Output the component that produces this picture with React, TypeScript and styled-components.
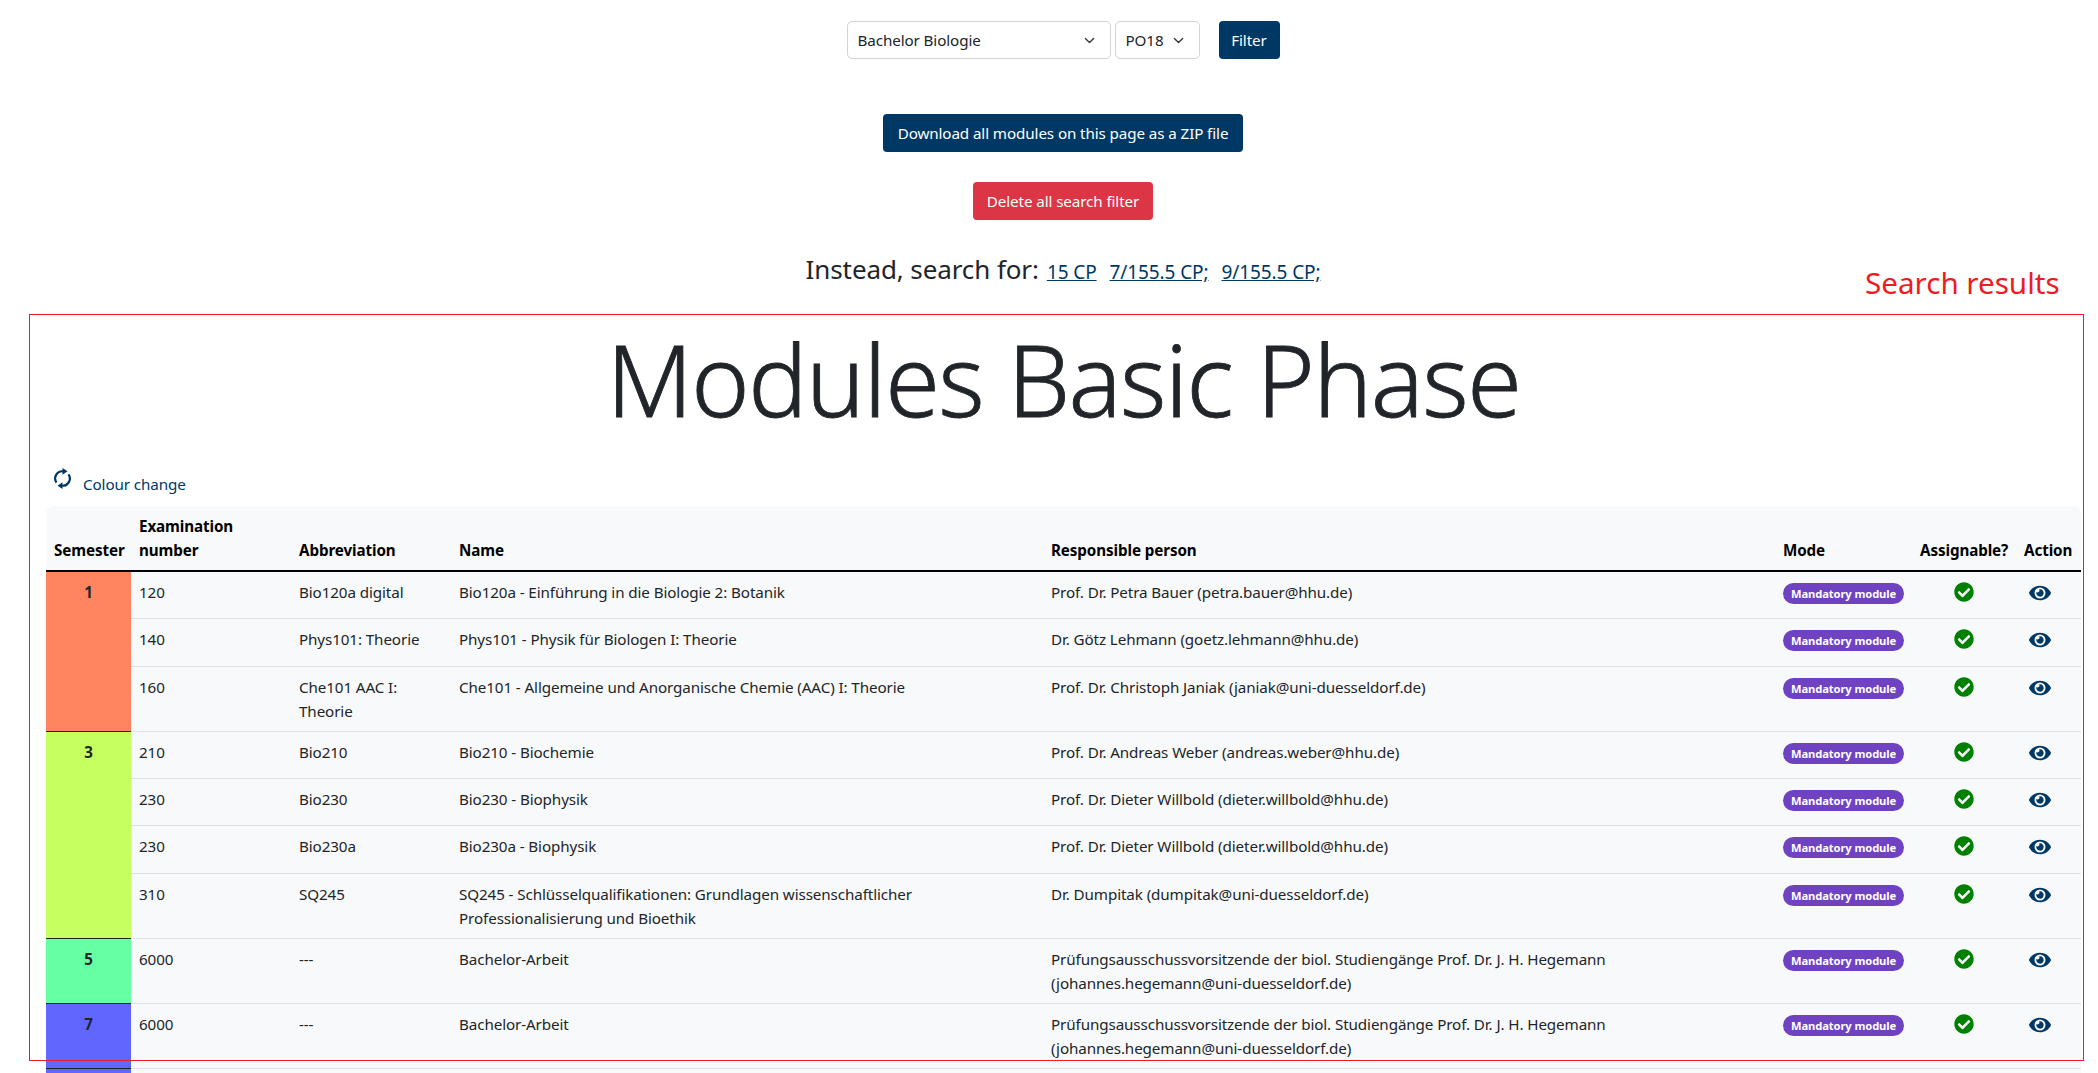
import React from 'react';
import styled, { createGlobalStyle } from 'styled-components';
import { FaCheckCircle, FaEye } from 'react-icons/fa';

const BLUE = '#003865';
const RED = '#ed1c24';

const GlobalStyle = createGlobalStyle`
  html, body {
    margin: 0;
    height: 1073px;
    overflow: hidden;
    background: #fff;
  }
  body {
    font-family: "Noto Sans", "Liberation Sans", sans-serif;
    font-size: 15.2px;
    line-height: 24px;
    color: #212529;
    letter-spacing: -0.1px;
  }
`;

const Page = styled.div`
  position: relative;
  width: 2098px;
  height: 1073px;
  overflow: hidden;
`;

const TopSection = styled.div`
  display: flex;
  flex-direction: column;
  align-items: center;
  padding: 21px 0 0 28px;
`;

const FilterForm = styled.form`
  display: flex;
  align-items: center;
  height: 38px;
`;

const Select = styled.select<{ $width: number }>`
  appearance: none;
  box-sizing: border-box;
  width: ${({ $width }) => $width}px;
  height: 38px;
  margin-right: 4px;
  padding: 0 10px;
  border: 1px solid #ced4da;
  border-radius: 5px;
  font: inherit;
  letter-spacing: inherit;
  color: #212529;
  background: #fff url("data:image/svg+xml,%3csvg xmlns='http://www.w3.org/2000/svg' viewBox='0 0 16 16'%3e%3cpath fill='none' stroke='%23343a40' stroke-linecap='round' stroke-linejoin='round' stroke-width='2' d='m2 5 6 6 6-6'/%3e%3c/svg%3e") no-repeat right 14px center / 13px 11px;
`;

const Button = styled.button<{ $danger?: boolean }>`
  box-sizing: border-box;
  height: 38px;
  padding: 0 ${({ $danger }) => ($danger ? 13.5 : 14.5)}px;
  border: 0;
  border-radius: 4px;
  font: inherit;
  letter-spacing: inherit;
  color: #fff;
  background: ${({ $danger }) => ($danger ? '#dc3545' : BLUE)};
`;

const FilterButton = styled(Button)`
  width: 61px;
  margin-left: 15px;
  padding: 0;
`;

const DownloadButton = styled(Button)`
  margin-top: 55px;
`;

const DeleteButton = styled(Button)`
  margin-top: 30px;
`;

const Instead = styled.div`
  display: flex;
  align-items: baseline;
  gap: 13px;
  margin-top: 31px;
  height: 36px;
  line-height: 36px;
`;

const InsteadLabel = styled.span`
  font-size: 26px;
  margin-right: -5px;
`;

const InsteadLink = styled.a`
  font-size: 19px;
  color: ${BLUE};
  text-decoration: underline;
`;

const Results = styled.section`
  padding: 0 17px 0 46px;
`;

const Title = styled.h1`
  margin: 0;
  padding-top: 34px;
  height: 115px;
  font-size: 99px;
  line-height: 115px;
  font-weight: 300;
  text-align: center;
  letter-spacing: -1.5px;
  -webkit-text-stroke: 0.8px #212529;
`;

const ColourChange = styled.a`
  display: flex;
  align-items: flex-end;
  gap: 12px;
  height: 24px;
  margin: 36px 0 10px 8px;
  color: ${BLUE};
  text-decoration: none;
`;

const SyncSvg = styled.svg`
  width: 17px;
  height: 21px;
  margin-bottom: 7px;
  fill: none;
  stroke: ${BLUE};
  stroke-width: 2.2;
`;

const SyncHead = styled.path`
  fill: ${BLUE};
  stroke: none;
`;

const TableFrame = styled.div`
  border-radius: 8px 8px 0 0;
  overflow: hidden;
  background: #f8f9fa;
`;

const Table = styled.table`
  width: 100%;
  table-layout: fixed;
  border-collapse: collapse;
`;

const Th = styled.th`
  padding: 8px;
  text-align: left;
  vertical-align: bottom;
  font-weight: 700;
  color: #000;
  border-bottom: 2px solid #000;
  &:first-child { padding-right: 0; padding-left: 8px; }
`;

const Tr = styled.tr<{ $height: number }>`
  height: ${({ $height }) => $height}px;
`;

const Td = styled.td`
  padding: 8px;
  vertical-align: top;
  border-bottom: 1px solid #dee2e6;
`;

const SemesterCell = styled(Td)<{ $color: string }>`
  text-align: center;
  font-weight: 700;
  background: ${({ $color }) => $color};
  border-bottom: 1px solid #212529;
`;

const IconCell = styled(Td)`
  text-align: center;
`;

const EyeCell = styled(Td)`
  padding-right: 26px;
  text-align: center;
`;

const Badge = styled.span`
  display: inline-block;
  padding: 0 8px;
  border-radius: 11px;
  font-size: 11.2px;
  line-height: 21px;
  font-weight: 700;
  color: #fff;
  background: #6f42c1;
  white-space: nowrap;
  vertical-align: top;
  margin-top: 3px;
`;

const CheckIcon = styled(FaCheckCircle)`
  width: 20px;
  height: 20px;
  color: green;
  vertical-align: top;
  margin-top: 2px;
`;

const EyeIcon = styled(FaEye)`
  width: 22px;
  height: 20px;
  color: ${BLUE};
  vertical-align: top;
  margin-top: 3px;
`;

const ResultsFrame = styled.div`
  position: absolute;
  left: 29px;
  top: 314px;
  width: 2053px;
  height: 745px;
  border: 1px solid ${RED};
  pointer-events: none;
`;

const ResultsLabel = styled.div`
  position: absolute;
  left: 1865px;
  top: 263px;
  font-size: 29.6px;
  line-height: 40px;
  letter-spacing: 0;
  color: ${RED};
`;

type Row = { exam: string; abbr: React.ReactNode; name: React.ReactNode; person: React.ReactNode; height?: number };
type Group = { semester: string; color: string; span: number; rows: Row[] };

const HEGEMANN = (
  <>
    Prüfungsausschussvorsitzende der biol. Studiengänge Prof. Dr. J. H. Hegemann
    <br />
    (johannes.hegemann@uni-duesseldorf.de)
  </>
);

const GROUPS: Group[] = [
  {
    semester: '1',
    color: '#ff8560',
    span: 3,
    rows: [
      { exam: '120', abbr: 'Bio120a digital', name: 'Bio120a - Einführung in die Biologie 2: Botanik', person: 'Prof. Dr. Petra Bauer (petra.bauer@hhu.de)' },
      { exam: '140', abbr: 'Phys101: Theorie', name: 'Phys101 - Physik für Biologen I: Theorie', person: 'Dr. Götz Lehmann (goetz.lehmann@hhu.de)', height: 48 },
      { exam: '160', abbr: <>Che101 AAC I:<br />Theorie</>, name: 'Che101 - Allgemeine und Anorganische Chemie (AAC) I: Theorie', person: 'Prof. Dr. Christoph Janiak (janiak@uni-duesseldorf.de)' },
    ],
  },
  {
    semester: '3',
    color: '#c5ff60',
    span: 4,
    rows: [
      { exam: '210', abbr: 'Bio210', name: 'Bio210 - Biochemie', person: 'Prof. Dr. Andreas Weber (andreas.weber@hhu.de)' },
      { exam: '230', abbr: 'Bio230', name: 'Bio230 - Biophysik', person: 'Prof. Dr. Dieter Willbold (dieter.willbold@hhu.de)' },
      { exam: '230', abbr: 'Bio230a', name: 'Bio230a - Biophysik', person: 'Prof. Dr. Dieter Willbold (dieter.willbold@hhu.de)', height: 48 },
      { exam: '310', abbr: 'SQ245', name: <>SQ245 - Schlüsselqualifikationen: Grundlagen wissenschaftlicher<br />Professionalisierung und Bioethik</>, person: 'Dr. Dumpitak (dumpitak@uni-duesseldorf.de)' },
    ],
  },
  {
    semester: '5',
    color: '#66ffa3',
    span: 1,
    rows: [{ exam: '6000', abbr: '---', name: 'Bachelor-Arbeit', person: HEGEMANN }],
  },
  {
    semester: '7',
    color: '#6066ff',
    span: 1,
    rows: [{ exam: '6000', abbr: '---', name: 'Bachelor-Arbeit', person: HEGEMANN }],
  },
];

export default function App() {
  return (
    <Page>
      <GlobalStyle />
      <TopSection>
        <FilterForm>
          <Select $width={264} defaultValue="bio">
            <option value="bio">Bachelor Biologie</option>
          </Select>
          <Select $width={85} defaultValue="po18">
            <option value="po18">PO18</option>
          </Select>
          <FilterButton type="button">Filter</FilterButton>
        </FilterForm>
        <DownloadButton type="button">Download all modules on this page as a ZIP file</DownloadButton>
        <DeleteButton type="button" $danger>Delete all search filter</DeleteButton>
        <Instead>
          <InsteadLabel>Instead, search for:</InsteadLabel>
          <InsteadLink href="#">15 CP</InsteadLink>
          <InsteadLink href="#">7/155.5 CP;</InsteadLink>
          <InsteadLink href="#">9/155.5 CP;</InsteadLink>
        </Instead>
      </TopSection>

      <Results>
        <Title>Modules Basic Phase</Title>
        <ColourChange href="#">
          <SyncSvg viewBox="0 0 17 21">
            <path d="M9 3.3 A7.2 7.2 0 0 0 2.5 14.6" />
            <SyncHead d="M8.5 0 L13.5 3.3 L8.5 6.8 Z" />
            <path d="M8 17.7 A7.2 7.2 0 0 0 14.5 6.4" />
            <SyncHead d="M8.5 14.2 L3.5 17.7 L8.5 21 Z" />
          </SyncSvg>
          Colour change
        </ColourChange>
        <TableFrame>
          <Table>
            <colgroup>
              <col width="85" />
              <col width="160" />
              <col width="160" />
              <col width="592" />
              <col width="732" />
              <col width="137" />
              <col width="104" />
              <col width="65" />
            </colgroup>
            <thead>
              <tr>
                <Th>Semester</Th>
                <Th>Examination number</Th>
                <Th>Abbreviation</Th>
                <Th>Name</Th>
                <Th>Responsible person</Th>
                <Th>Mode</Th>
                <Th>Assignable?</Th>
                <Th>Action</Th>
              </tr>
            </thead>
            <tbody>
              {GROUPS.map((group) =>
                group.rows.map((row, i) => (
                  <Tr key={group.semester + i} $height={row.height ?? 47}>
                    {i === 0 && (
                      <SemesterCell rowSpan={group.span} $color={group.color}>
                        {group.semester}
                      </SemesterCell>
                    )}
                    <Td>{row.exam}</Td>
                    <Td>{row.abbr}</Td>
                    <Td>{row.name}</Td>
                    <Td>{row.person}</Td>
                    <Td><Badge>Mandatory module</Badge></Td>
                    <IconCell><CheckIcon /></IconCell>
                    <EyeCell><EyeIcon /></EyeCell>
                  </Tr>
                ))
              )}
              <tr>
                <SemesterCell $color="#6066ff" />
                <Td colSpan={7} />
              </tr>
            </tbody>
          </Table>
        </TableFrame>
      </Results>

      <ResultsLabel>Search results</ResultsLabel>
      <ResultsFrame />
    </Page>
  );
}
